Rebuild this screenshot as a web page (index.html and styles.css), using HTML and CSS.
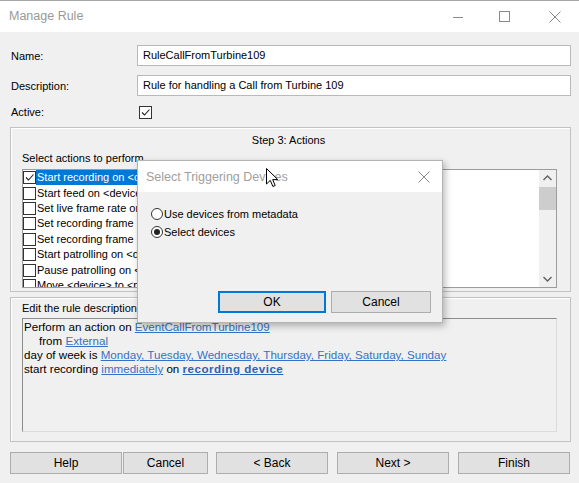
FILE: index.html
```html
<!DOCTYPE html>
<html>
<head>
<meta charset="utf-8">
<link rel="stylesheet" href="styles.css">
</head>
<body>
<div class="win">
  <div class="titlebar">
    <span class="title">Manage Rule</span>
    <div class="controls">
      <svg class="ctl min" width="10" height="10" viewBox="0 0 10 10"><line x1="0" y1="5.5" x2="10" y2="5.5" stroke="#8a8a8a" stroke-width="1"/></svg>
      <svg class="ctl max" width="11" height="11" viewBox="0 0 11 11"><rect x="0.5" y="0.5" width="10" height="10" fill="none" stroke="#8a8a8a" stroke-width="1"/></svg>
      <svg class="ctl close" width="12" height="12" viewBox="0 0 12 12"><path d="M0.5 0.5 L11.5 11.5 M11.5 0.5 L0.5 11.5" stroke="#8a8a8a" stroke-width="1"/></svg>
    </div>
  </div>

  <div class="form">
    <div class="frow">
      <label class="flabel">Name:</label>
      <div class="input">RuleCallFromTurbine109</div>
    </div>
    <div class="frow">
      <label class="flabel">Description:</label>
      <div class="input">Rule for handling a Call from Turbine 109</div>
    </div>
    <div class="frow active-row">
      <label class="flabel">Active:</label>
      <span class="cb cb-active"><svg width="11" height="11" viewBox="0 0 11 11"><path d="M2 5.5 L4.5 8 L9.5 2.5" fill="none" stroke="#222" stroke-width="1.1"/></svg></span>
    </div>
  </div>

  <div class="group g1">
    <div class="step-title">Step 3: Actions</div>
    <div class="sel-label">Select actions to perform</div>
    <div class="listbox">
      <div class="items">
        <div class="item"><span class="cb"><svg width="11" height="11" viewBox="0 0 11 11"><path d="M2 5.5 L4.5 8 L9.5 2.5" fill="none" stroke="#222" stroke-width="1.1"/></svg></span><span class="itext sel">Start recording on &lt;devices&gt;</span></div>
        <div class="item"><span class="cb"></span><span class="itext">Start feed on &lt;devices&gt;</span></div>
        <div class="item"><span class="cb"></span><span class="itext">Set live frame rate on &lt;devices&gt;</span></div>
        <div class="item"><span class="cb"></span><span class="itext">Set recording frame rate on &lt;devices&gt;</span></div>
        <div class="item"><span class="cb"></span><span class="itext">Set recording frame rate to all frames on &lt;devices&gt;</span></div>
        <div class="item"><span class="cb"></span><span class="itext">Start patrolling on &lt;device&gt; using &lt;profile&gt;</span></div>
        <div class="item"><span class="cb"></span><span class="itext">Pause patrolling on &lt;devices&gt;</span></div>
        <div class="item"><span class="cb"></span><span class="itext">Move &lt;device&gt; to &lt;preset&gt; position</span></div>
      </div>
      <div class="vscroll">
        <svg class="arrow" width="17" height="17" viewBox="0 0 17 17"><path d="M4.5 10 L8.5 6 L12.5 10" fill="none" stroke="#606060" stroke-width="1.4"/></svg>
        <div class="thumb"></div>
        <div class="track"></div>
        <svg class="arrow" width="17" height="17" viewBox="0 0 17 17"><path d="M4.5 7 L8.5 11 L12.5 7" fill="none" stroke="#606060" stroke-width="1.4"/></svg>
      </div>
    </div>
  </div>

  <div class="group g2">
    <div class="edit-label">Edit the rule description (click an underlined item)</div>
    <div class="desc">
      <div class="dline">Perform an action on <a class="lnk">EventCallFromTurbine109</a></div>
      <div class="dline indent">from <a class="lnk">External</a></div>
      <div class="dline">day of week is <a class="lnk">Monday, Tuesday, Wednesday, Thursday, Friday, Saturday, Sunday</a></div>
      <div class="dline">start recording <a class="lnk">immediately</a> on <a class="lnk bold">recording device</a></div>
    </div>
  </div>

  <div class="buttons">
    <div class="btn b-help">Help</div>
    <div class="btn b-cancel">Cancel</div>
    <div class="btn b-back">&lt; Back</div>
    <div class="btn b-next">Next &gt;</div>
    <div class="btn b-finish">Finish</div>
  </div>

  <div class="modal">
    <div class="mtitlebar">
      <span class="mtitle">Select Triggering Devices</span>
      <svg width="12" height="12" viewBox="0 0 12 12"><path d="M0.5 0.5 L11.5 11.5 M11.5 0.5 L0.5 11.5" stroke="#8a8a8a" stroke-width="1"/></svg>
    </div>
    <div class="mbody">
      <div class="radio-row"><span class="radio"></span><span>Use devices from metadata</span></div>
      <div class="radio-row"><span class="radio on"><span class="dot"></span></span><span>Select devices</span></div>
      <div class="mbuttons">
        <div class="btn mok">OK</div>
        <div class="btn mcancel">Cancel</div>
      </div>
    </div>
  </div>

  <svg class="cursor" width="13" height="20" viewBox="0 0 13 20"><path d="M0.5 0.5 L0.5 16 L4.3 12.4 L6.9 18.5 L9.2 17.5 L6.7 11.6 L11.8 11.6 Z" fill="#fff" stroke="#000" stroke-width="1" stroke-linejoin="round"/></svg>
</div>
</body>
</html>
```

FILE: styles.css
```css
* { box-sizing: border-box; }
html, body { margin: 0; padding: 0; }
body {
  font-family: "Liberation Sans", Arial, sans-serif;
  font-size: 11px;
  color: #000;
  background: #f0f0f0;
}
.win {
  position: relative;
  width: 579px;
  height: 483px;
  overflow: hidden;
  background: #f0f0f0;
}
.titlebar {
  height: 32px;
  background: #fff;
  border-top: 1px solid #a8a8a8;
  display: flex;
  align-items: center;
  justify-content: space-between;
}
.title {
  font-size: 12.5px;
  color: #999;
  padding-left: 9px;
  padding-bottom: 1px;
}
.controls {
  display: flex;
  align-items: center;
  height: 100%;
}
.ctl { display: block; }
.min { margin-right: 36px; }
.max { margin-right: 39px; }
.close { margin-right: 18px; }

.form {
  padding: 13px 0 0 11px;
}
.frow {
  display: grid;
  grid-template-columns: 126px 434px;
  align-items: center;
  height: 21px;
  margin-bottom: 9px;
}
.frow.active-row { height: 13px; margin-bottom: 9px; }
.flabel { line-height: 14px; }
.input {
  height: 21px;
  background: #fff;
  border: 1px solid #b9b9b9;
  padding: 0 5px;
  line-height: 19px;
}
.cb {
  display: inline-block;
  width: 13px;
  height: 13px;
  border: 1px solid #333;
  background: #fff;
  flex: none;
  position: relative;
}
.cb svg { display: block; position: absolute; left: 0; top: 0; }
.cb-active { margin-left: 2px; }

.group {
  margin-left: 10px;
  width: 561px;
  border: 1px solid #c2c2c2;
  box-shadow: inset 1px 1px 0 #fff;
}
.g1 {
  height: 165px;
  padding: 5px 13px 0 11px;
}
.step-title {
  text-align: center;
  line-height: 14px;
  padding-right: 2px;
}
.sel-label {
  line-height: 14px;
  margin-top: 4px;
}
.listbox {
  margin-top: 4px;
  height: 119px;
  border: 1px solid #9c9c9c;
  background: #fff;
  display: flex;
}
.items {
  flex: 1;
  overflow: hidden;
}
.item {
  height: 15.4px;
  display: flex;
  align-items: center;
  white-space: nowrap;
}
.itext {
  line-height: 15px;
  padding: 0 2px 0 1px;
}
.itext.sel {
  background: #0078d7;
  color: #fff;
}
.vscroll {
  width: 17px;
  background: #f0f0f0;
  display: flex;
  flex-direction: column;
}
.arrow { display: block; flex: none; }
.thumb {
  height: 23px;
  background: #cdcdcd;
  flex: none;
}
.track { flex: 1; }

.g2 {
  margin-top: 5px;
  height: 145px;
  padding: 3px 13px 0 11px;
}
.edit-label {
  line-height: 14px;
  white-space: nowrap;
}
.desc {
  margin-top: 3px;
  height: 114px;
  border-top: 1px solid #8c8c8c;
  border-left: 1px solid #8c8c8c;
  border-right: 1px solid #dcdcdc;
  border-bottom: 1px solid #dcdcdc;
  padding: 1px 0 0 1px;
  font-size: 11.6px;
}
.dline {
  line-height: 14px;
  white-space: nowrap;
}
.dline.indent { padding-left: 15px; }
.lnk {
  color: #3572c6;
  text-decoration: underline;
}
.lnk.bold { font-weight: bold; color: #2a63b5; letter-spacing: 0.5px; }

.buttons {
  display: flex;
  margin-top: 10px;
  padding-left: 10px;
}
.btn {
  height: 22px;
  background: #e1e1e1;
  border: 1px solid #adadad;
  text-align: center;
  line-height: 20px;
  font-size: 12px;
}
.b-help { width: 112px; }
.b-cancel { width: 85px; margin-left: 1px; }
.b-back { width: 112px; margin-left: 8px; }
.b-next { width: 112px; margin-left: 9px; }
.b-finish { width: 112px; margin-left: 9px; }

.modal {
  position: absolute;
  left: 137px;
  top: 160px;
  width: 306px;
  height: 163px;
  background: #f0f0f0;
  border: 1px solid #b4b4b4;
  box-shadow: 2px 3px 7px rgba(0,0,0,0.28);
}
.mtitlebar {
  height: 31px;
  background: #fff;
  display: flex;
  align-items: center;
  justify-content: space-between;
  padding: 0 12px 0 8px;
}
.mtitlebar svg { display: block; margin-top: 1px; }
.mtitle {
  font-size: 12.5px;
  color: #a0a0a0;
}
.mbody {
  padding: 13px 11px 0 13px;
}
.radio-row {
  display: flex;
  align-items: center;
  height: 18px;
  font-size: 11px;
}
.radio {
  width: 12px;
  height: 12px;
  border: 1px solid #333;
  border-radius: 50%;
  background: #fff;
  margin-right: 1px;
  display: flex;
  align-items: center;
  justify-content: center;
  flex: none;
}
.radio .dot {
  width: 6px;
  height: 6px;
  border-radius: 50%;
  background: #222;
}
.mbuttons {
  display: flex;
  justify-content: flex-end;
  margin-top: 50px;
}
.mok {
  width: 108px;
  border: 2px solid #0078d7;
  line-height: 18px;
}
.mcancel {
  width: 100px;
  margin-left: 5px;
}
.cursor {
  position: absolute;
  left: 266px;
  top: 168px;
}
```
